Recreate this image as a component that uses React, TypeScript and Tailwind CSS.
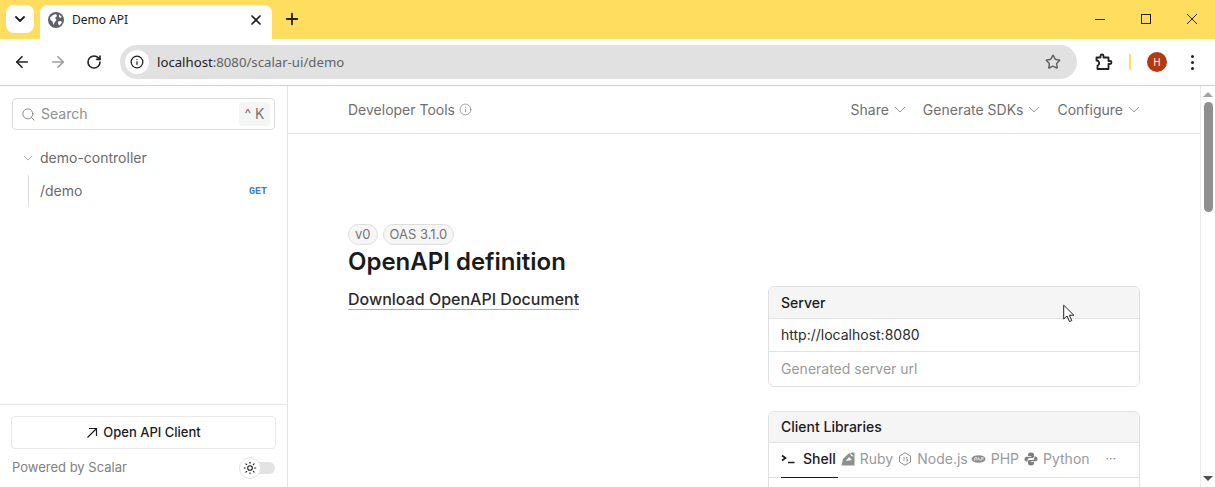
import React from 'react';
import {
  ArrowLeft,
  ArrowRight,
  ChevronDown,
  Info,
  Plus,
  RotateCw,
  Search,
  Star,
  Sun,
  X,
} from 'lucide-react';

function Globe() {
  return (
    <svg viewBox="0 0 16 16" className="w-4 h-4">
      <circle cx="8" cy="8" r="8" fill="#5f6368" />
      <path d="M2 5.5 L5 3 L8 2 L9 4 L7 6 L8.5 8 L6.5 10.5 L5.5 13 L4.5 9.5 L2.5 8 Z" fill="#fff" />
      <path d="M10 9.5 L13 9 L14 10.5 L11.5 13.5 L10 12 Z" fill="#fff" />
      <path d="M11 2.5 L13.5 4.5 L13 6 L11 5 Z" fill="#fff" />
    </svg>
  );
}

function Extension() {
  return (
    <svg viewBox="0 0 18 18" className="w-[18px] h-[18px]" fill="none" stroke="#202124" strokeWidth="1.8" strokeLinejoin="round">
      <path d="M1.5 4.5 H5.5 V3 A1.5 1.5 0 0 1 8.5 3 V4.5 H13.5 V8 H15 A1.5 1.5 0 0 1 15 11 H13.5 V16 H2.5 V12.5 A2.2 2.2 0 0 0 4 9.5 A2.2 2.2 0 0 0 1.5 7.5 Z" />
    </svg>
  );
}

// thin chevron, the lucide one leaves too much padding at this size
function Chevron({ className }: { className: string }) {
  return (
    <svg viewBox="0 0 12 7" className={className} fill="none" stroke="#9a9a9a" strokeWidth="1">
      <path d="M1 1 L6 6 L11 1" />
    </svg>
  );
}

function ShellIcon() {
  return (
    <svg viewBox="0 0 14 12" className="w-[14px] h-3" fill="none" stroke="#1b1b1b" strokeWidth="1.7">
      <path d="M1 2.5 L4.5 5 L1 7.5" />
      <path d="M7 9.5 H13.5" />
    </svg>
  );
}

function RubyIcon() {
  return (
    <svg viewBox="0 0 14 14" className="w-[14px] h-[14px]" fill="#8f8f8f">
      <path d="M0.5 13.5 L2 7 L7 2 L10 0.8 L13.5 0.5 L13.5 13.5 Z" />
      <path d="M5 9 L8 5 L11 8 Z" fill="#fff" />
      <path d="M9 1 L13 4.5 L10 4 Z" fill="#fff" />
    </svg>
  );
}

function NodeIcon() {
  return (
    <svg viewBox="0 0 14 14" className="w-[14px] h-[14px]" fill="none" stroke="#8f8f8f" strokeWidth="1">
      <path d="M7 0.8 L12.5 4 V10 L7 13.2 L1.5 10 V4 Z" />
      <path d="M6 5 V9 M8 5.5 H9.5 M8 7 H9.5 V9 H8" strokeWidth="0.9" />
    </svg>
  );
}

function PhpIcon() {
  return (
    <svg viewBox="0 0 16 10" className="w-[15px] h-[10px]">
      <ellipse cx="8" cy="5" rx="7.5" ry="4" fill="#8f8f8f" />
      <path d="M3.5 7 L4.3 3.5 H6 V5.2 H4.5 M7 6.5 L7.8 3 M7.5 5 H9.5 L9.2 6.5 M10.5 7 L11.3 3.5 H13 V5.2 H11.5" fill="none" stroke="#fff" strokeWidth="0.7" />
    </svg>
  );
}

function PythonIcon() {
  return (
    <svg viewBox="0 0 14 14" className="w-[14px] h-[14px]" fill="#808080">
      <path d="M7 0.5 C4.5 0.5 4 1.5 4 2.7 V4 H7.2 V4.7 H2.5 C1.2 4.7 0.5 5.7 0.5 7 C0.5 8.6 1.2 9.5 2.5 9.5 H3.6 V8 C3.6 6.7 4.6 6 5.7 6 H8.5 C9.5 6 10 5.4 10 4.5 V2.7 C10 1.3 9 0.5 7 0.5 Z" />
      <path d="M7 13.5 C9.5 13.5 10 12.5 10 11.3 V10 H6.8 V9.3 H11.5 C12.8 9.3 13.5 8.3 13.5 7 C13.5 5.4 12.8 4.5 11.5 4.5 H10.4 V6 C10.4 7.3 9.4 8 8.3 8 H5.5 C4.5 8 4 8.6 4 9.5 V11.3 C4 12.7 5 13.5 7 13.5 Z" />
    </svg>
  );
}

function BrowserChrome() {
  return (
    <>
      {/* Tab strip */}
      <div className="h-[39px] bg-[#ffdd5e] flex items-start pl-[6px] shrink-0 relative">
        <div className="mt-[5px] w-[28px] h-[28px] bg-white rounded-lg flex items-center justify-center">
          <ChevronDown className="w-4 h-4 text-[#202124]" strokeWidth={2.8} />
        </div>
        <div className="ml-[6px] mt-[5px] w-[232px] h-[34px] bg-white rounded-t-lg flex items-center pl-2 pr-[8px] pb-[5px]">
          <Globe />
          <span className="ml-[8px] flex-1 text-xs text-[#202124] font-['Noto_Sans',sans-serif]">Demo API</span>
          <X className="w-4 h-4 text-[#202124]" strokeWidth={2.6} />
        </div>
        <Plus className="ml-[11px] mt-[10px] w-[18px] h-[18px] text-[#202124]" strokeWidth={2.4} />
        <div className="ml-auto mr-[18px] flex items-center gap-[36px] h-[38px]">
          <div className="w-[10px] h-px bg-[#202124]" />
          <div className="w-[10px] h-[10px] border border-[#202124]" />
          <svg viewBox="0 0 10 10" className="w-[10px] h-[10px]" stroke="#202124" strokeWidth="1">
            <path d="M0 0 L10 10 M10 0 L0 10" />
          </svg>
        </div>
      </div>
      {/* Address bar */}
      <div className="h-[47px] bg-white border-b border-[#cfcfcf] rounded-t-lg flex items-center pl-[13px] shrink-0">
        <ArrowLeft className="w-[18px] h-[18px] text-[#202124]" strokeWidth={2.2} />
        <ArrowRight className="ml-[18px] w-[18px] h-[18px] text-[#9d9d9d]" strokeWidth={2.2} />
        <RotateCw className="ml-[19px] w-4 h-4 text-[#202124]" strokeWidth={2.4} />
        <div className="ml-[18px] w-[957px] h-[34px] bg-[#e1e1e1] rounded-full flex items-center pl-[5px] pr-[16px]">
          <div className="w-6 h-6 bg-white rounded-full flex items-center justify-center">
            <Info className="w-[14px] h-[14px] text-[#202124]" strokeWidth={2.2} />
          </div>
          <span className="ml-[8px] pt-px flex-1 text-[13.2px] text-[#5f6368] font-['Noto_Sans',sans-serif]">
            <span className="text-[#202124]">localhost</span>:8080/scalar-ui/demo
          </span>
          <Star className="w-4 h-4 text-[#5f6368]" strokeWidth={2.2} />
        </div>
        <div className="ml-[18px]">
          <Extension />
        </div>
        <div className="ml-[16px] w-[2px] h-[16px] bg-[#ffdd5e]" />
        <div className="ml-[16px] w-5 h-5 rounded-full bg-[#b5390e] text-white text-[10px] flex items-center justify-center font-['Noto_Sans',sans-serif]">
          H
        </div>
        <div className="ml-[24px] flex flex-col gap-[3px]">
          <div className="w-[3px] h-[3px] rounded-full bg-[#202124]" />
          <div className="w-[3px] h-[3px] rounded-full bg-[#202124]" />
          <div className="w-[3px] h-[3px] rounded-full bg-[#202124]" />
        </div>
      </div>
    </>
  );
}

function Sidebar() {
  return (
    <aside className="w-[288px] shrink-0 border-r border-[#e5e5e5] flex flex-col">
      <div className="px-3 pt-3">
        <div className="h-[32px] border border-[#dcdcdc] rounded flex items-center pl-[8px] pr-[4px]">
          <Search className="w-[15px] h-[15px] text-[#8a8a8a]" strokeWidth={1.6} />
          <span className="ml-[5px] flex-1 text-sm text-[#8f8f8f]">Search</span>
          <span className="w-[31px] h-[24px] bg-[#f5f5f5] rounded text-sm text-[#757575] flex items-center justify-center">^ K</span>
        </div>
      </div>
      <div className="mt-[18px] pl-[23px] h-[20px] flex items-center">
        <Chevron className="w-[10px] h-[6px]" />
        <span className="ml-[7px] text-sm text-[#6b6b6b]">demo-controller</span>
      </div>
      <div className="mt-[7px] ml-[28px] h-[32px] border-l border-[#dedede] flex items-center pl-[11px] pr-[20px]">
        <span className="flex-1 text-sm text-[#6b6b6b]">/demo</span>
        <span className="text-[10px] font-bold text-[#3d80c4] font-['Liberation_Mono',monospace]">GET</span>
      </div>
      <div className="mt-auto border-t border-[#e5e5e5] px-[11px] pt-[11px] pb-[8px]">
        <div className="h-[33px] pt-px border border-[#e8e8e8] rounded flex items-center justify-center text-[13px] font-medium text-[#1b1b1b]">
          <svg viewBox="0 0 12 12" className="w-3 h-3 mr-[5px]" fill="none" stroke="#1b1b1b" strokeWidth="1.2">
            <path d="M1.5 10.5 L10.5 1.5 M3 1.5 H10.5 V9" />
          </svg>
          Open API Client
        </div>
        <div className="mt-[8px] pl-px pr-px flex items-center">
          <span className="flex-1 text-[13px] text-[#808080]">Powered by Scalar</span>
          <div className="relative w-[36px] h-[22px] flex items-center justify-end">
            <div className="w-[24px] h-[12px] rounded-full bg-[#e3e3e3]" />
            <div className="absolute left-0 top-0 w-[22px] h-[22px] rounded-full bg-white border border-[#e3e3e3] flex items-center justify-center">
              <Sun className="w-[14px] h-[14px] text-[#1b1b1b]" strokeWidth={1.8} />
            </div>
          </div>
        </div>
      </div>
    </aside>
  );
}

function HeaderLink({ label }: { label: string }) {
  return (
    <span className="flex items-center text-sm text-[#6f6f6f]">
      {label}
      <Chevron className="ml-[5px] w-[12px] h-[7px]" />
    </span>
  );
}

function Badge({ label }: { label: string }) {
  return (
    <span className="h-[21px] px-[6px] border border-[#dedede] bg-[#f6f6f6] rounded-full text-[13px] text-[#757575] flex items-center">
      {label}
    </span>
  );
}

function ServerCard() {
  return (
    <div className="w-[372px] h-[101px] border border-[#e0e0e0] rounded-md overflow-hidden text-sm">
      <div className="h-[32px] bg-[#f5f5f5] border-b border-[#e3e3e3] px-3 flex items-center font-medium text-[#1b1b1b]">Server</div>
      <div className="h-[33px] border-b border-[#e3e3e3] px-3 flex items-center text-[#2b2b2b]">http://localhost:8080</div>
      <div className="h-[34px] px-3 flex items-center text-[#9a9a9a]">Generated server url</div>
    </div>
  );
}

function ClientTab({ icon, label, active, className }: { icon: React.ReactNode; label: string; active?: boolean; className?: string }) {
  return (
    <span className={active ? 'flex items-center gap-[8px] text-[#1b1b1b] font-medium' : `flex items-center gap-[5px] text-[#9a9a9a] ${className ?? ''}`}>
      {icon}
      {label}
    </span>
  );
}

function ClientCard() {
  return (
    <div className="mt-[24px] w-[372px] h-[120px] border border-[#e0e0e0] rounded-t-md overflow-hidden">
      <div className="h-[31px] bg-[#f5f5f5] border-b border-[#e3e3e3] px-3 flex items-center font-medium text-sm text-[#1b1b1b]">Client Libraries</div>
      <div className="relative h-[35px] pb-[2px] border-b border-[#e3e3e3] px-3 flex items-center text-sm">
        <ClientTab icon={<ShellIcon />} label="Shell" active />
        <ClientTab icon={<RubyIcon />} label="Ruby" className="ml-[5px]" />
        <ClientTab icon={<NodeIcon />} label="Node.js" className="ml-[5px]" />
        <ClientTab icon={<PhpIcon />} label="PHP" className="ml-[3px]" />
        <ClientTab icon={<PythonIcon />} label="Python" className="ml-[5px]" />
        <span className="ml-[16px] text-xs text-[#808080]">···</span>
        <div className="absolute left-3 bottom-[-1px] w-[57px] h-px bg-[#1b1b1b]" />
      </div>
    </div>
  );
}

function Scrollbar() {
  return (
    <div className="w-[15px] shrink-0 bg-white border-l border-[#ececec] flex flex-col items-center">
      <div className="mt-[6px] w-0 h-0 border-x-[5px] border-x-transparent border-b-[5px] border-b-[#a3a3a3]" />
      <div className="mt-[5px] w-[9px] h-[110px] rounded-full bg-[#8f8f8f]" />
      <div className="mt-auto mb-[6px] w-0 h-0 border-x-[5px] border-x-transparent border-t-[5px] border-t-[#505050]" />
    </div>
  );
}

export default function App() {
  return (
    <div className="relative w-[1215px] h-[487px] flex flex-col overflow-hidden bg-white font-['Inter',sans-serif]">
      <BrowserChrome />
      <div className="flex-1 flex min-h-0">
        <Sidebar />
        <main className="flex-1 min-w-0 overflow-hidden">
          {/* Toolbar */}
          <div className="h-[48px] border-b border-[#e5e5e5] px-[60px] flex items-center">
            <span className="flex items-center text-sm text-[#6f6f6f]">
              Developer Tools
              <Info className="ml-[4px] w-[13px] h-[13px] text-[#8a8a8a]" strokeWidth={1.5} />
            </span>
            <div className="ml-auto flex items-center gap-[17px]">
              <HeaderLink label="Share" />
              <HeaderLink label="Generate SDKs" />
              <HeaderLink label="Configure" />
            </div>
          </div>
          {/* Intro section */}
          <div className="px-[60px] pt-[90px] flex justify-between">
            <div>
              <div className="flex gap-[5px]">
                <Badge label="v0" />
                <Badge label="OAS 3.1.0" />
              </div>
              <h1 className="mt-[2px] text-2xl font-semibold text-[#1b1b1b] leading-[30px]">OpenAPI definition</h1>
              <div className="mt-[12px] inline-block text-base font-medium text-[#2b2b2b] leading-[20px] border-b border-[#b0b0b0]">
                Download OpenAPI Document
              </div>
            </div>
            <div className="pt-[62px]">
              <ServerCard />
              <ClientCard />
            </div>
          </div>
        </main>
        <Scrollbar />
      </div>
      {/* Mouse cursor */}
      <svg viewBox="0 0 12 18" className="absolute left-[1063px] top-[304px] w-3 h-[19px]">
        <path d="M0.7 0.7 V14.5 L4 11.5 L6.5 17 L8.8 16 L6.3 10.7 H10.8 Z" fill="#fff" stroke="#222" strokeWidth="1" />
      </svg>
    </div>
  );
}
